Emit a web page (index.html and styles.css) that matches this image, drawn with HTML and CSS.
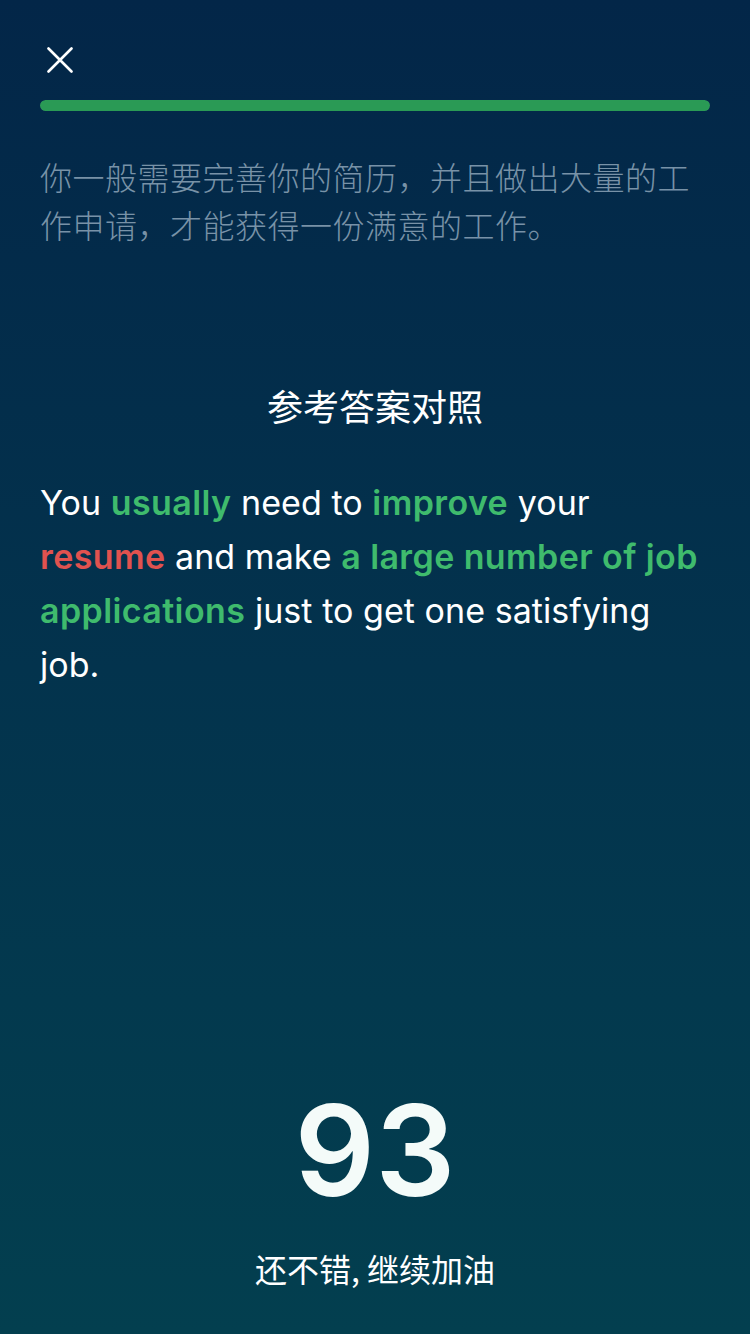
FILE: index.html
```html
<!DOCTYPE html>
<html lang="zh-CN">
<head>
<meta charset="utf-8">
<title>参考答案对照</title>
<link rel="stylesheet" href="styles.css">
</head>
<body>
<div class="screen">
  <header class="top">
    <button class="close" aria-label="关闭">
      <svg width="26" height="26" viewBox="0 0 26 26"><path d="M1.5 1.5 L24.5 24.5 M24.5 1.5 L1.5 24.5" stroke="#ffffff" stroke-width="2.6" stroke-linecap="round" fill="none"/></svg>
    </button>
  </header>
  <div class="progress"><div class="progress-fill"></div></div>
  <p class="prompt">你一般需要完善你的简历，并且做出大量的工作申请，才能获得一份满意的工作。</p>
  <h2 class="ref-title">参考答案对照</h2>
  <p class="answer">You <span class="ok">usually</span> need to <span class="ok">improve</span> your <span class="bad">resume</span> and make <span class="ok">a large number of job</span> <span class="ok">applications</span> just to get one satisfying job.</p>
  <div class="spacer"></div>
  <div class="score">93</div>
  <p class="comment">还不错, 继续加油</p>
</div>
</body>
</html>
```

FILE: styles.css
```css
html, body {
  margin: 0;
  padding: 0;
}
body {
  width: 750px;
  height: 1334px;
  background: linear-gradient(180deg, #032648 0%, #03334d 50%, #033f4f 100%);
  font-family: Inter, "Noto Sans", "Noto Sans CJK SC", sans-serif;
  color: #ffffff;
}
.screen {
  box-sizing: border-box;
  height: 1334px;
  padding: 47px 40px 42px;
  display: flex;
  flex-direction: column;
}
.top {
  display: flex;
  height: 26px;
}
.close {
  width: 26px;
  height: 26px;
  padding: 0;
  margin: 0 0 0 7px;
  border: 0;
  background: none;
  display: block;
}
.close svg {
  display: block;
}
.progress {
  margin-top: 27px;
  height: 11px;
  border-radius: 6px;
  background: #1f4a5a;
  overflow: hidden;
}
.progress-fill {
  width: 100%;
  height: 100%;
  background: #2a9a55;
  border-radius: 6px;
}
.prompt {
  margin: 41px 0 0;
  font-family: "Noto Sans CJK SC", sans-serif;
  font-size: 32px;
  line-height: 48px;
  font-weight: 300;
  color: #7892a7;
  letter-spacing: 0.5px;
}
.ref-title {
  margin: 133px 0 0;
  text-align: center;
  font-family: "Noto Sans CJK SC", sans-serif;
  font-size: 36px;
  line-height: 48px;
  font-weight: 400;
  color: #ffffff;
}
.answer {
  margin: 47px 0 0;
  font-size: 34px;
  line-height: 54px;
  font-weight: 400;
  letter-spacing: 0.05px;
  color: #ffffff;
}
.ok {
  color: #3fbb6d;
  font-weight: 600;
  letter-spacing: 0.4px;
}
.bad {
  color: #e0524f;
  font-weight: 600;
  letter-spacing: 0.4px;
}
.spacer {
  flex: 1;
}
.score {
  text-align: center;
  font-size: 126px;
  line-height: 130px;
  font-weight: 600;
  color: #f4fbf9;
}
.comment {
  margin: 29px 0 0;
  text-align: center;
  font-family: "Noto Sans CJK SC", sans-serif;
  font-size: 32px;
  line-height: 48px;
  font-weight: 400;
  color: #ffffff;
}
```
